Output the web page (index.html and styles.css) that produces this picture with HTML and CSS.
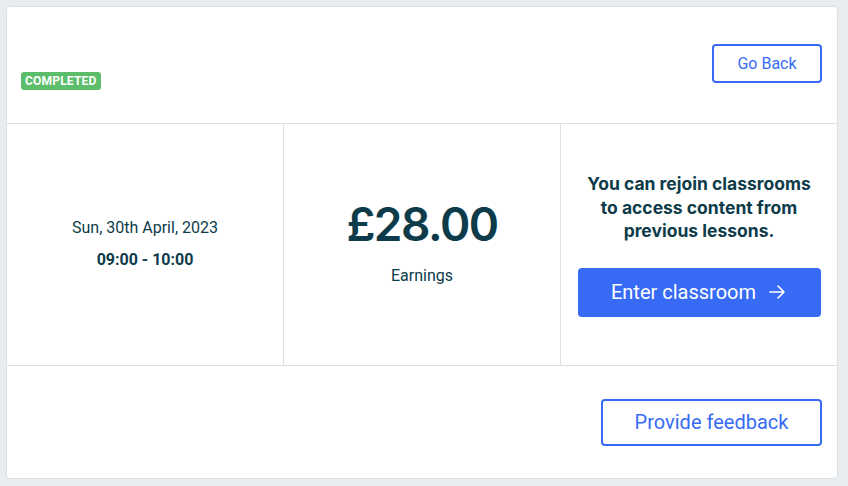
FILE: index.html
```html
<!DOCTYPE html>
<html>
<head>
<meta charset="utf-8">
<link rel="stylesheet" href="styles.css">
</head>
<body>
<div class="card">
  <div class="top">
    <span class="badge">COMPLETED</span>
    <button class="btn-outline btn-back">Go Back</button>
  </div>
  <div class="middle">
    <div class="col col-date">
      <div class="date">Sun, 30th April, 2023</div>
      <div class="time">09:00 - 10:00</div>
    </div>
    <div class="col col-earn">
      <div class="price">£28.00</div>
      <div class="label">Earnings</div>
    </div>
    <div class="col col-class">
      <div class="note">You can rejoin classrooms<br>to access content from<br>previous lessons.</div>
      <button class="btn-primary">Enter classroom
        <svg width="20" height="20" viewBox="0 0 20 20" fill="none" stroke="#fff" stroke-width="1.6" stroke-linecap="round" stroke-linejoin="round"><path d="M3 10h14M11 4l6 6-6 6"/></svg>
      </button>
    </div>
  </div>
  <div class="bottom">
    <button class="btn-outline btn-feedback">Provide feedback</button>
  </div>
</div>
</body>
</html>
```
FILE: styles.css
```css
* { box-sizing: border-box; }
html, body { margin: 0; padding: 0; }
body {
  background: #e9edf0;
  padding: 6px 10px 8px 6px;
  font-family: Roboto, "Liberation Sans", sans-serif;
  color: #0d3b4a;
}
.card {
  width: 832px;
  height: 473px;
  background: #fff;
  border: 1px solid #dde1e4;
  border-radius: 4px;
  display: flex;
  flex-direction: column;
}
.top {
  height: 117px;
  border-bottom: 1px solid #dde1e4;
  display: flex;
  justify-content: space-between;
  padding: 37px 15px 33px 14px;
}
.badge {
  align-self: flex-end;
  background: #5cbe6a;
  color: #fff;
  font-weight: 700;
  font-size: 12px;
  line-height: 18px;
  height: 18px;
  padding: 0 4px;
  border-radius: 3px;
  letter-spacing: 0.2px;
}
button {
  font-family: Roboto, "Liberation Sans", sans-serif;
  cursor: pointer;
}
.btn-outline {
  background: #fff;
  border: 2px solid #376bf5;
  border-radius: 4px;
  color: #376bf5;
}
.btn-back {
  width: 110px;
  height: 39px;
  font-size: 16px;
}
.middle {
  height: 242px;
  border-bottom: 1px solid #dde1e4;
  display: grid;
  grid-template-columns: 276px 277px 1fr;
}
.col {
  display: flex;
  flex-direction: column;
  align-items: center;
  justify-content: center;
}
.col + .col { border-left: 1px solid #dde1e4; }
.date { font-size: 16px; line-height: 20px; margin-top: -2px; }
.time { font-size: 16px; line-height: 20px; font-weight: 700; margin-top: 12px; }
.price {
  font-family: Inter, "Noto Sans", sans-serif;
  font-weight: 600;
  font-size: 46px;
  letter-spacing: -1.5px;
  line-height: 50px;
  margin-top: -4px;
}
.label { font-size: 16px; line-height: 20px; margin-top: 17px; }
.col-class { padding: 0 16px; }
.note {
  font-family: Inter, "Noto Sans", sans-serif;
  font-weight: 700;
  font-size: 17.5px;
  line-height: 23.5px;
  text-align: center;
  margin-top: 0;
}
.btn-primary {
  margin-top: 25px;
  width: 243px;
  height: 49px;
  background: #376bf5;
  border: none;
  border-radius: 4px;
  color: #fff;
  font-size: 20px;
  display: flex;
  align-items: center;
  justify-content: center;
  gap: 11px;
}
.bottom {
  flex: 1;
  display: flex;
  justify-content: flex-end;
  align-items: center;
  padding-right: 15px;
}
.btn-feedback {
  width: 221px;
  height: 47px;
  font-size: 20px;
}
```
